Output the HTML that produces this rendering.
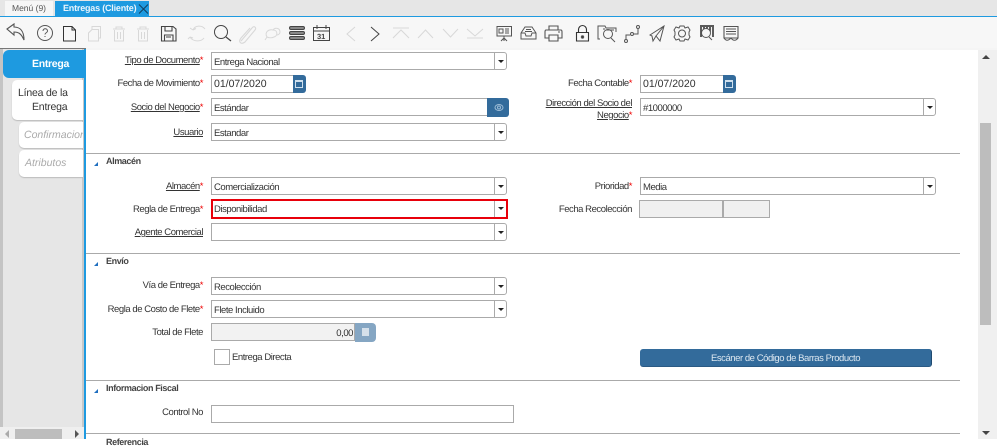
<!DOCTYPE html>
<html><head><meta charset="utf-8"><style>
html,body{margin:0;padding:0}
body{width:997px;height:439px;overflow:hidden;position:relative;background:#fff;font-family:"Liberation Sans",sans-serif;font-size:9.5px;letter-spacing:-.45px;color:#333;text-rendering:geometricPrecision}
div,span.a{position:absolute;box-sizing:border-box}
.l{text-align:right;left:86px;width:117px;height:14px;line-height:14px;white-space:nowrap;color:#333}
.r{text-align:right;left:500px;width:132px;height:14px;line-height:14px;white-space:nowrap;color:#333}
.u{text-decoration:underline}
i{color:#e00;font-style:normal}
.f{background:#fff;border:1px solid #aaa;height:18px;line-height:19px;padding-left:2px;color:#333;white-space:nowrap}
.b{width:13px;height:18px;background:#fff;border:1px solid #aaa;border-radius:0 3px 3px 0}
.b:after{content:"";position:absolute;left:3px;top:7px;border:3px solid transparent;border-top:3px solid #222;border-bottom:0}
.c{width:13px;height:18px;background:#336b9b;border-radius:0 3px 3px 0}
.c:after{content:"";position:absolute;left:2px;top:5px;width:6px;height:5px;border:1px solid #cfe0ee;border-top:2px solid #cfe0ee;box-sizing:content-box}
.hr{left:86px;width:874px;height:1px;background:#aaa}
.t{left:106px;font-weight:bold;font-size:9px;letter-spacing:-.4px;line-height:12px;color:#444;white-space:nowrap}
.tri{left:94px;width:0;height:0;border-left:4px solid transparent;border-bottom:4px solid #1f6fc0}
.tab{background:#fff;border-radius:5px 0 0 5px;box-shadow:0 1px 1px #bbb}
.d{font-size:10.5px;letter-spacing:0;line-height:17px}
</style></head><body>
<div style="left:0;top:0;width:997px;height:17px;background:#e6e6e6"></div>
<div style="left:5px;top:1px;width:48px;height:15px;background:#f6f6f6;text-align:center;line-height:15px;font-size:8.5px;letter-spacing:0;color:#555">Menú (9)</div>
<div style="left:55px;top:1px;width:94px;height:15px;background:#1e9ae0;color:#e8f4fc;font-weight:bold;font-size:9px;letter-spacing:-.2px;line-height:15px;padding-left:8px;white-space:nowrap">Entregas (Cliente)</div>
<svg style="position:absolute;left:137px;top:3px" width="12" height="12" fill="none" stroke="#123f5e" stroke-width="1"><path d="M2 1.500L11 10.500M11 1.500L2 10.500"/></svg>
<div style="left:0;top:16px;width:997px;height:1px;background:#1e9ae0"></div>
<div style="left:0;top:17px;width:997px;height:32px;background:#f7f7f7"></div>
<svg style="position:absolute;left:0;top:17px" width="760" height="32" fill="none" stroke="#555" stroke-width="1">
<path d="M7 12L14 7V10C20 10 24 14 24 23C21 16 18 15 14 15V18Z" stroke-width="1.1"/>
<circle cx="45" cy="16" r="7.500"/><path d="M43 14C43 11 47.500 11 47.500 14C47.500 16 45 15.500 45 17.500M45 19V20"/>
<path d="M63.500 9.500H72L75.500 13V24H63.500ZM72 9.500V13H75.500" stroke="#333"/>
<g stroke="#d8d8d8"><path d="M92 12.500H98.500V24H88.500V16ZM92 12.500V9.500H100.500V21H98.500"/>
<path d="M113 12H125M116 12V10H122V12M114.500 13V24H123.500V13M117.500 15V22M120.500 15V22"/>
<path d="M137 12H149M140 12V10H146V12M138.500 13V24H147.500V13M141.500 15V22M144.500 15V22"/>
<path d="M205 12C202 8 195 8 193 13M190 20C193 25 201 25 204 21M193 13L190 11M193 13L196 11.500M190 20L188 22M190 20L193 21"/>
<path d="M241 24L252 11C254 8 257 11 255 13L245 25C241 28 238 25 241 21L250 11" stroke-width="1.100"/>
<path d="M265 23L267 20C264 15 269 12 273 13C278 13 278 19 274 20C272 21 269 21 267 20M273 13C275 10 280 11 280 15C280 17 278 18 277 18"/>
<path d="M355 10L347 17 355 24"/>
<path d="M393 11H409M393 21L401 13 409 21"/>
<path d="M418 21L425.500 13 433 21"/>
<path d="M443 12L450.500 20 458 12"/>
<path d="M467 12L475 19 483 12M467 21H483"/></g>
<path d="M371 10L379 17 371 24" stroke="#444"/>
<g stroke="#444">
<path d="M161.500 9.500H173L176 12V24H161.500ZM165 9.500V14H172V9.500M164.500 24V18H173V24M166 20H171" stroke-width="1.100"/>
<circle cx="221" cy="15" r="6.500"/><path d="M226 20L231 24" stroke-width="1.200"/>
<rect x="289.500" y="9.500" width="15" height="3" rx="1.500" fill="#888"/><rect x="289.500" y="14.500" width="15" height="3" rx="1.500" fill="#888"/><rect x="289.500" y="19.500" width="15" height="3" rx="1.500" fill="#888"/>
<path d="M313.500 10.500H329.500V23.500H313.500ZM313.500 14H329.500M317 8V12M326 8V12"/>
</g>
<text x="317" y="22" font-size="7.500" font-weight="bold" letter-spacing="0" fill="#444" stroke="none" font-family="Liberation Sans">31</text>
<g stroke="#555">
<path d="M497 9.500H511.500V19H497ZM504 19V24M501 24L504 21 507 24M499 12H503V16H499ZM505 12H509M505 14H509M505 16H509"/>
<path d="M521 16L525 10H532L536 16V22H521ZM521 16H525L526 19H531L532 16H536M526 12.500H531M525 14.500H532"/>
<path d="M549 13V9H558V13M546 13H561Q562 13 562 15V21H558M549 21H545V15Q545 13 546 13M549 18H558V24H549ZM558 15H560" stroke-width="1.100"/>
<path d="M576.500 15.500H588.500V24H576.500ZM578.500 15V13C578.500 7 586.500 7 586.500 13V15" stroke="#333" stroke-width="1.100"/><circle cx="582.500" cy="20" r="1.200" fill="#333"/>
<path d="M600 22H598V9H605L606 11H616V15M604 11V13M606 13H614"/><circle cx="608" cy="17" r="4.500"/><path d="M611 21L615 25"/>
<circle cx="626" cy="24" r="1.500"/><circle cx="632" cy="17" r="1.500"/><circle cx="638" cy="10" r="1.500"/><path d="M626 22V18H630M634 17H638V12"/>
<path d="M650 18L664 9 660 24 656 19 653 24 652 19ZM664 9L656 19"/>
<circle cx="682" cy="16.500" r="3.500"/><path d="M680 9H684L685 11 688 10 690 13 689 15V18L690 20 688 23 685 22 684 24H680L679 22 676 23 674 20 675 18V15L674 13 676 10 679 11Z"/>
<path d="M700 9H714M701 10V20M704 10V15M707 10V12M710 10V15M713 10V20" stroke-width="1.700" stroke="#444"/><circle cx="706" cy="16" r="4.500" fill="#f7f7f7"/><path d="M709 20L712 23"/>
<path d="M724 9.500H738V21H724ZM726 12H736M726 14.500H736M726 17H736" stroke-width="1.100"/><path d="M724 21C726 24 728 24 731 21C733 24 736 24 738 21"/>
</g></svg>
<div style="left:0;top:48px;width:86px;height:1px;background:#777"></div>
<div style="left:86px;top:48px;width:911px;height:2px;background:#f5f5f5"></div>

<div style="left:0;top:49px;width:84px;height:390px;background:#e6e6e6"></div>
<div style="left:0;top:49px;width:3px;height:378px;background:#c4c4c4"></div>
<div style="left:82px;top:49px;width:2px;height:378px;background:#c8c8c8"></div>
<div style="left:84px;top:49px;width:2px;height:390px;background:#1e9ae0"></div>
<div style="left:3px;top:50px;width:81px;height:28px;background:#1e9ae0;border-radius:6px 0 0 6px;color:#fff;font-weight:bold;font-size:10.500px;letter-spacing:-.3px;line-height:28px;padding-left:29px">Entrega</div>
<div class="tab" style="left:12px;top:80px;width:71px;height:40px;color:#333;font-size:10.500px;letter-spacing:-.2px;line-height:14px"><span class="a" style="left:6px;top:6px;white-space:nowrap">Línea de la</span><span class="a" style="left:20px;top:20px">Entrega</span></div>
<div class="tab" style="left:19px;top:122px;width:64px;height:26px;overflow:hidden;color:#aaa;font-style:italic;font-size:10.500px;letter-spacing:0;line-height:27px;padding-left:5px;white-space:nowrap">Confirmacion</div>
<div class="tab" style="left:19px;top:150px;width:64px;height:27px;color:#aaa;font-style:italic;font-size:10.500px;letter-spacing:0;line-height:27px;padding-left:6px">Atributos</div>
<div style="left:0;top:427px;width:84px;height:12px;background:#efefef"></div>
<div style="left:15px;top:429px;width:47px;height:10px;background:#bdbdbd"></div>
<div style="left:5px;top:430px;border:4px solid transparent;border-right:4px solid #aaa;border-left:0"></div>
<div style="left:75px;top:430px;border:4px solid transparent;border-left:4px solid #555;border-right:0"></div>

<div style="left:978px;top:50px;width:19px;height:389px;background:#f0f0f0"></div>
<div style="left:980px;top:123px;width:11px;height:202px;background:#bdbdbd"></div>
<div style="left:982px;top:55px;border:4px solid transparent;border-bottom:4px solid #444;border-top:0"></div>
<div style="left:982px;top:431px;border:4px solid transparent;border-top:4px solid #444;border-bottom:0"></div>

<div class="l" style="top:54px"><span class="u">Tipo de Documento</span><i>*</i></div>
<div class="f" style="left:211px;top:52px;width:284px">Entrega Nacional</div><div class="b" style="left:494px;top:52px"></div>
<div class="l" style="top:77px">Fecha de Movimiento<i>*</i></div>
<div class="f d" style="left:211px;top:75px;width:83px">01/07/2020</div><div class="c" style="left:293px;top:75px"></div>
<div class="l" style="top:101px"><span class="u">Socio del Negocio</span><i>*</i></div>
<div class="f" style="left:211px;top:98px;width:277px">Estándar</div>
<div style="left:487px;top:98px;width:22px;height:19px;background:#336b9b;border-radius:0 3px 3px 0"></div>
<svg style="position:absolute;left:494px;top:103px" width="10" height="9" fill="none" stroke="#9dbcd6"><ellipse cx="5" cy="4.500" rx="4" ry="3"/><circle cx="5" cy="4.500" r="1.500"/></svg>
<div class="l" style="top:126px"><span class="u">Usuario</span></div>
<div class="f" style="left:211px;top:123px;width:284px">Estandar</div><div class="b" style="left:494px;top:123px"></div>

<div class="r" style="top:77px">Fecha Contable<i>*</i></div>
<div class="f d" style="left:640px;top:75px;width:84px">01/07/2020</div><div class="c" style="left:723px;top:75px"></div>
<div class="r" style="top:98px;line-height:11.500px;height:28px"><span class="u">Dirección del Socio del<br>Negocio</span><i>*</i></div>
<div class="f" style="left:640px;top:98px;width:284px">#1000000</div><div class="b" style="left:923px;top:98px"></div>

<div class="hr" style="top:153px"></div><div class="tri" style="top:162px"></div><div class="t" style="top:155px">Almacén</div>

<div class="l" style="top:180px"><span class="u">Almacén</span><i>*</i></div>
<div class="f" style="left:211px;top:177px;width:284px">Comercialización</div><div class="b" style="left:494px;top:177px"></div>
<div class="l" style="top:203px">Regla de Entrega<i>*</i></div>
<div class="f" style="left:212px;top:200px;width:283px;height:17px;border:0;line-height:20px">Disponibilidad</div><div class="b" style="left:494px;top:200px;height:17px;border:0;border-left:1px solid #aaa"></div>
<div style="left:211px;top:199px;width:297px;height:20px;border:2px solid #e8000b"></div>
<div class="l" style="top:226px"><span class="u">Agente Comercial</span></div>
<div class="f" style="left:211px;top:223px;width:284px"></div><div class="b" style="left:494px;top:223px"></div>

<div class="r" style="top:180px">Prioridad<i>*</i></div>
<div class="f" style="left:640px;top:177px;width:284px">Media</div><div class="b" style="left:923px;top:177px"></div>
<div class="r" style="top:203px">Fecha Recolección</div>
<div class="f" style="left:639px;top:200px;width:84px;background:#f0f0f0"></div>
<div class="f" style="left:723px;top:200px;width:47px;background:#f0f0f0"></div>

<div class="hr" style="top:253px"></div><div class="tri" style="top:262px"></div><div class="t" style="top:255px">Envío</div>
<div class="l" style="top:279px">Vía de Entrega<i>*</i></div>
<div class="f" style="left:211px;top:277px;width:284px">Recolección</div><div class="b" style="left:494px;top:277px"></div>
<div class="l" style="top:303px">Regla de Costo de Flete<i>*</i></div>
<div class="f" style="left:211px;top:300px;width:284px">Flete Incluido</div><div class="b" style="left:494px;top:300px"></div>
<div class="l" style="top:326px">Total de Flete</div>
<div class="f" style="left:211px;top:323px;width:144px;background:#f2f2f2;text-align:right;padding-right:1px">0,00</div>
<div style="left:355px;top:323px;width:21px;height:19px;background:#85a6c3;border-radius:0 4px 4px 0"></div>
<div style="left:362px;top:328px;width:7px;height:8px;background:#d5e0ea"></div>
<div style="left:214px;top:349px;width:16px;height:16px;border:1px solid #aaa;background:#fff"></div>
<div style="left:232px;top:351px;line-height:14px;white-space:nowrap">Entrega Directa</div>
<div style="left:640px;top:349px;width:292px;height:18px;background:#336b9b;border-radius:3px;border-right:1px solid #1f4a70;border-bottom:1px solid #2b5a84;color:#dce7f0;text-align:center;line-height:19px">Escáner de Código de Barras Producto</div>

<div class="hr" style="top:380px"></div><div class="tri" style="top:389px"></div><div class="t" style="top:382px">Informacion Fiscal</div>
<div class="l" style="top:406px">Control No</div>
<div class="f" style="left:211px;top:405px;width:303px"></div>
<div class="hr" style="top:433px"></div>
<div class="t" style="top:436px">Referencia</div>
</body></html>
